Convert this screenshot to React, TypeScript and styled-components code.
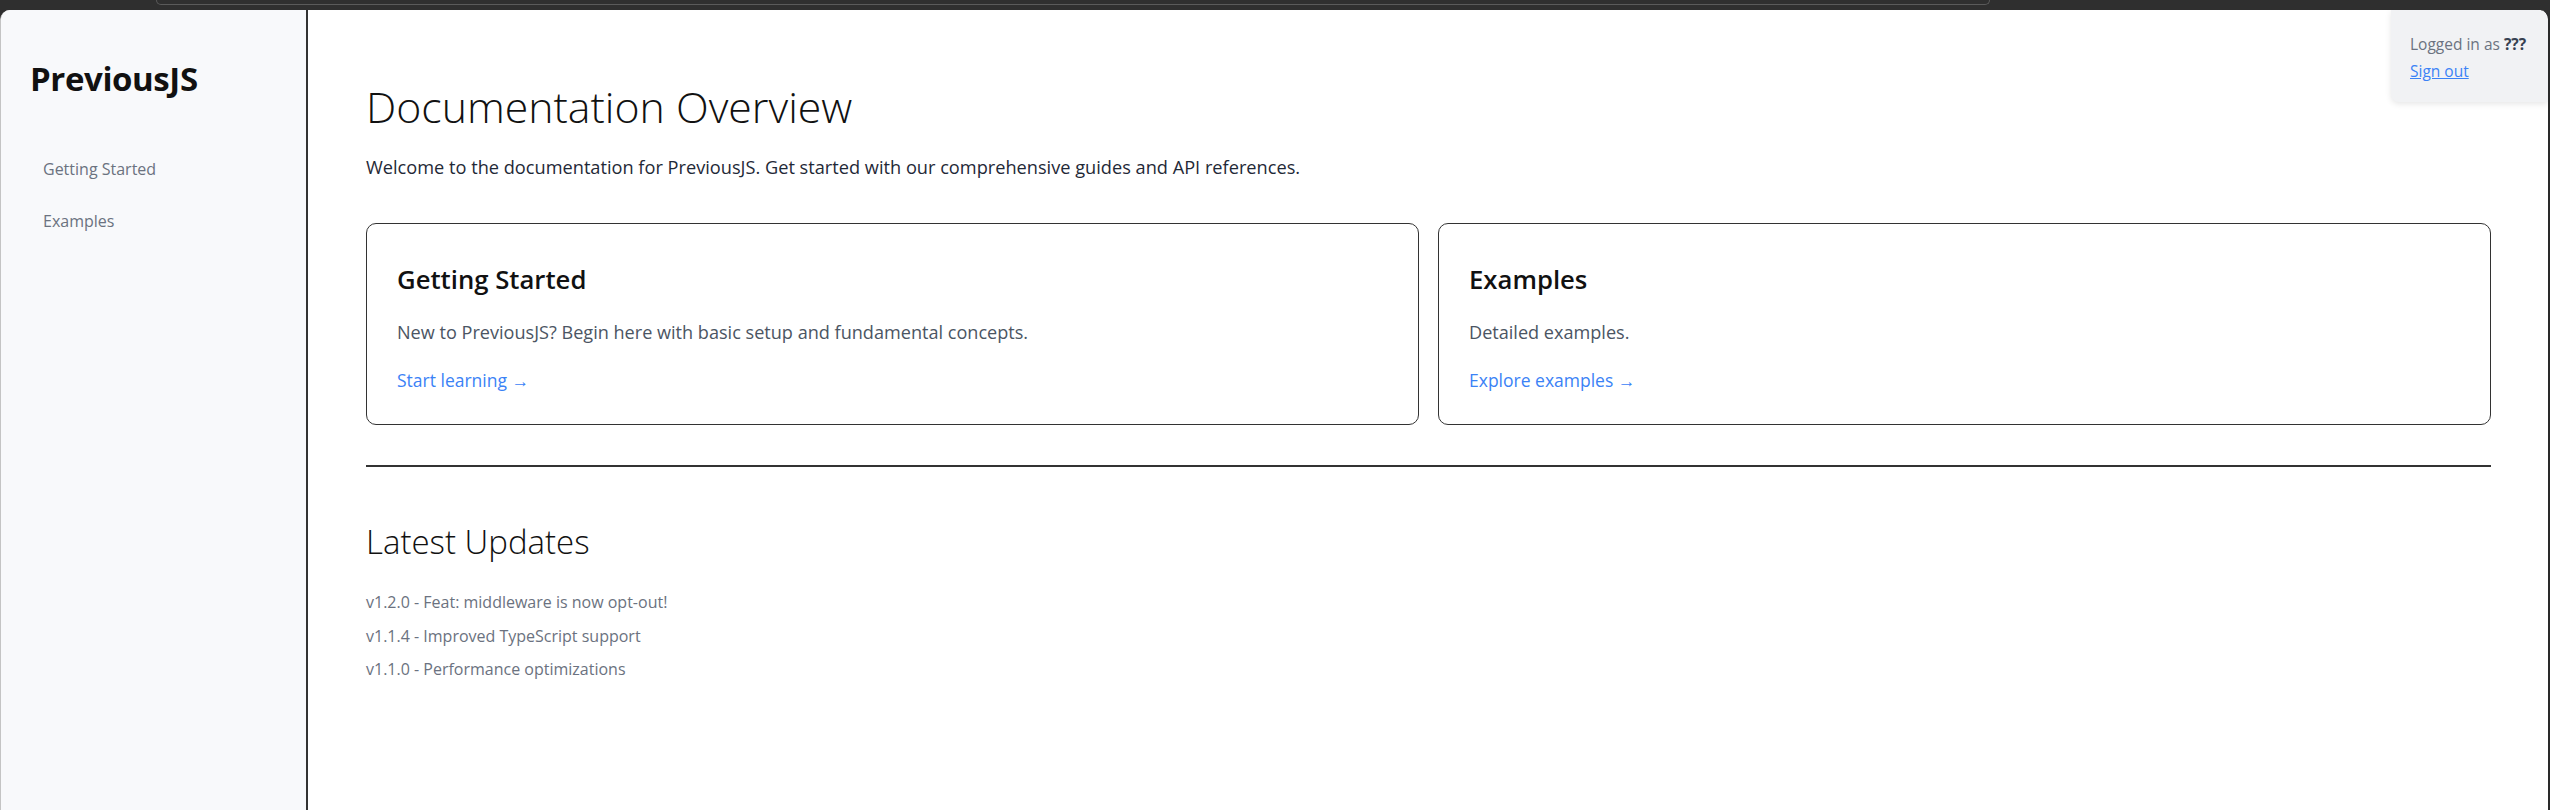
import React from 'react';
import styled, { createGlobalStyle } from 'styled-components';

const GlobalStyle = createGlobalStyle`
  html, body {
    margin: 0;
    padding: 0;
    background: #2f2f2f;
  }
  body {
    font-family: 'Open Sans', 'Noto Sans', sans-serif;
  }
  * {
    box-sizing: border-box;
  }
`;

const guides = [
  {
    title: 'Getting Started',
    text: 'New to PreviousJS? Begin here with basic setup and fundamental concepts.',
    link: 'Start learning',
  },
  {
    title: 'Examples',
    text: 'Detailed examples.',
    link: 'Explore examples',
  },
];

const updates = [
  'v1.2.0 - Feat: middleware is now opt-out!',
  'v1.1.4 - Improved TypeScript support',
  'v1.1.0 - Performance optimizations',
];

const App = () => {
  return (
    <Frame>
      <GlobalStyle />
      <ChromeStrip>
        <AddressOutline />
      </ChromeStrip>
      <Window>
        <Sidebar>
          <Logo>PreviousJS</Logo>
          <NavList>
            <NavItem href="#">Getting Started</NavItem>
            <NavItem href="#">Examples</NavItem>
          </NavList>
        </Sidebar>
        <Main>
          <PageTitle>Documentation Overview</PageTitle>
          <Intro>
            Welcome to the documentation for PreviousJS. Get started with our comprehensive guides and API
            references.
          </Intro>
          <CardGrid>
            {guides.map((g) => (
              <Card key={g.title}>
                <CardTitle>{g.title}</CardTitle>
                <CardText>{g.text}</CardText>
                <CardLink href="#">{g.link} →</CardLink>
              </Card>
            ))}
          </CardGrid>
          <Divider />
          <SectionTitle>Latest Updates</SectionTitle>
          <UpdateList>
            {updates.map((u) => (
              <UpdateItem key={u}>{u}</UpdateItem>
            ))}
          </UpdateList>
        </Main>
        <UserBox>
          <UserLine>
            Logged in as <strong>???</strong>
          </UserLine>
          <SignOut href="#">Sign out</SignOut>
        </UserBox>
      </Window>
    </Frame>
  );
};

export default App;

const Frame = styled.div`
  display: flex;
  flex-direction: column;
  width: 2550px;
  height: 810px;
  overflow: hidden;
`;

const ChromeStrip = styled.div`
  display: flex;
  height: 10px;
  padding: 0 560px 0 156px;
  background: #2f2f2f;
`;

const AddressOutline = styled.div`
  flex: 1;
  height: 5px;
  border: 1.5px solid #5a5a5a;
  border-top: none;
  border-radius: 0 0 14px 14px;
`;

const Window = styled.div`
  position: relative;
  display: flex;
  flex: 1;
  min-height: 0;
  background: #ffffff;
  border-radius: 10px 10px 0 0;
  border-left: 1px solid #c4c4c4;
  border-right: 2px solid #2a2a2a;
  overflow: hidden;
`;

const Sidebar = styled.aside`
  display: flex;
  flex-direction: column;
  width: 307px;
  flex-shrink: 0;
  padding: 50px 29px;
  background: #f8f9fb;
  border-right: 2px solid #333333;
`;

const Logo = styled.div`
  font-size: 33px;
  font-weight: 700;
  line-height: 38px;
  color: #111111;
  letter-spacing: -0.4px;
`;

const NavList = styled.nav`
  display: flex;
  flex-direction: column;
  gap: 16px;
  margin-top: 53px;
`;

const NavItem = styled.a`
  padding: 8px 13px;
  font-size: 16px;
  line-height: 20px;
  color: #6b7280;
  text-decoration: none;
`;

const Main = styled.main`
  flex: 1;
  min-width: 0;
  padding: 72px 57px 0 58px;
`;

const PageTitle = styled.h1`
  margin: 0;
  font-size: 42.8px;
  font-weight: 300;
  line-height: 50px;
  color: #111111;
`;

const Intro = styled.p`
  margin: 23px 0 0;
  font-size: 18.2px;
  line-height: 24px;
  color: #1f2937;
`;

const CardGrid = styled.div`
  display: grid;
  grid-template-columns: 1fr 1fr;
  gap: 19px;
  margin-top: 44px;
`;

const Card = styled.div`
  display: flex;
  flex-direction: column;
  height: 202px;
  padding: 38px 30px 28px;
  border: 1.5px solid #333333;
  border-radius: 10px;
`;

const CardTitle = styled.h3`
  margin: 0;
  font-size: 25.7px;
  font-weight: 600;
  line-height: 36px;
  color: #111111;
`;

const CardText = styled.p`
  margin: 22px 0 0;
  font-size: 18.1px;
  line-height: 24px;
  color: #4b5563;
`;

const CardLink = styled.a`
  margin-top: 24px;
  font-size: 17.5px;
  line-height: 24px;
  color: #3b82f6;
  text-decoration: none;
`;

const Divider = styled.hr`
  margin: 40px 0 0;
  border: none;
  border-top: 2px solid #333333;
`;

const SectionTitle = styled.h2`
  margin: 56px 0 0;
  font-size: 33px;
  font-weight: 300;
  line-height: 38px;
  color: #111111;
`;

const UpdateList = styled.ul`
  display: flex;
  flex-direction: column;
  gap: 10px;
  margin: 30px 0 0;
  padding: 0;
  list-style: none;
`;

const UpdateItem = styled.li`
  font-size: 16px;
  line-height: 23.5px;
  color: #6b7280;
`;

const UserBox = styled.div`
  position: absolute;
  top: 0;
  right: 0;
  width: 157px;
  padding: 24px 19px 21px;
  background: #f1f2f4;
  border-radius: 0 10px 0 8px;
  box-shadow: 0 2px 6px rgba(0, 0, 0, 0.1);
`;

const UserLine = styled.div`
  font-size: 15.5px;
  line-height: 20px;
  color: #6b7280;
  white-space: nowrap;

  strong {
    font-weight: 700;
    color: #374151;
  }
`;

const SignOut = styled.a`
  display: block;
  margin-top: 7px;
  font-size: 15.5px;
  line-height: 20px;
  color: #3b82f6;
  text-decoration: underline;
`;
